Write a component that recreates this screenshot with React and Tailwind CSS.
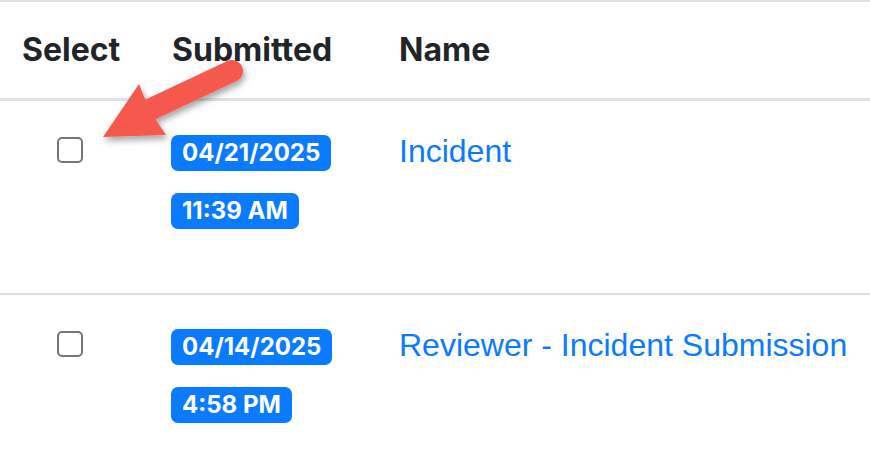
import React from 'react';

const rows = [
  { id: 1, date: '04/21/2025', time: '11:39 AM', name: 'Incident' },
  { id: 2, date: '04/14/2025', time: '4:58 PM', name: 'Reviewer - Incident Submission' },
];

function Badge({ children }) {
  return (
    <span className="inline-flex h-[36px] items-center rounded-[7px] bg-[#0a7bff] px-[11px] text-[24px] font-bold leading-none text-white [font-family:Inter,'Liberation_Sans',sans-serif]">
      {children}
    </span>
  );
}

function Arrow() {
  return (
    <svg
      className="pointer-events-none absolute left-0 top-0"
      width="870"
      height="456"
      viewBox="0 0 870 456"
    >
      <defs>
        <filter id="shadow" x="-20%" y="-20%" width="140%" height="140%">
          <feDropShadow dx="2" dy="4" stdDeviation="3" floodColor="#000" floodOpacity="0.35" />
        </filter>
      </defs>
      <g filter="url(#shadow)" fill="#f5594e">
        <line x1="145" y1="112" x2="232" y2="71" stroke="#f5594e" strokeWidth="22" strokeLinecap="round" />
        <polygon points="103,137 139,84 150,111 166,135" />
      </g>
    </svg>
  );
}

export default function App() {
  return (
    <div className="relative h-[456px] w-[870px] overflow-hidden bg-white [font-family:'Liberation_Sans',Arial,sans-serif]">
      <div className="border-t-2 border-[#dee2e6]">
        <div className="grid h-[99px] grid-cols-[150px_227px_1fr] items-center border-b-[3px] border-[#dee2e6] text-[32px] font-bold leading-[38px] text-[#212529] [font-family:Inter,'Liberation_Sans',sans-serif]">
          <div className="pl-[22px]">Select</div>
          <div className="pl-[22px]">Submitted</div>
          <div className="pl-[22px]">Name</div>
        </div>
        {rows.map((row) => (
          <div
            key={row.id}
            className="grid h-[194px] grid-cols-[150px_227px_1fr] border-b-2 border-[#dee2e6]"
          >
            <div className="pl-[22px] pt-[36px]">
              <div className="flex w-[95px] justify-center">
                <input
                  type="checkbox"
                  className="h-[26px] w-[26px] appearance-none rounded-[5px] border-2 border-[#767676] bg-white"
                />
              </div>
            </div>
            <div className="flex flex-col items-start gap-[22px] pl-[21px] pt-[34px]">
              <Badge>{row.date}</Badge>
              <Badge>{row.time}</Badge>
            </div>
            <div className="whitespace-nowrap pl-[22px] pt-[31px] text-[32px] leading-[38px]">
              <a href="#" className="text-[#0a7bff]">{row.name}</a>
            </div>
          </div>
        ))}
      </div>
      <Arrow />
    </div>
  );
}
